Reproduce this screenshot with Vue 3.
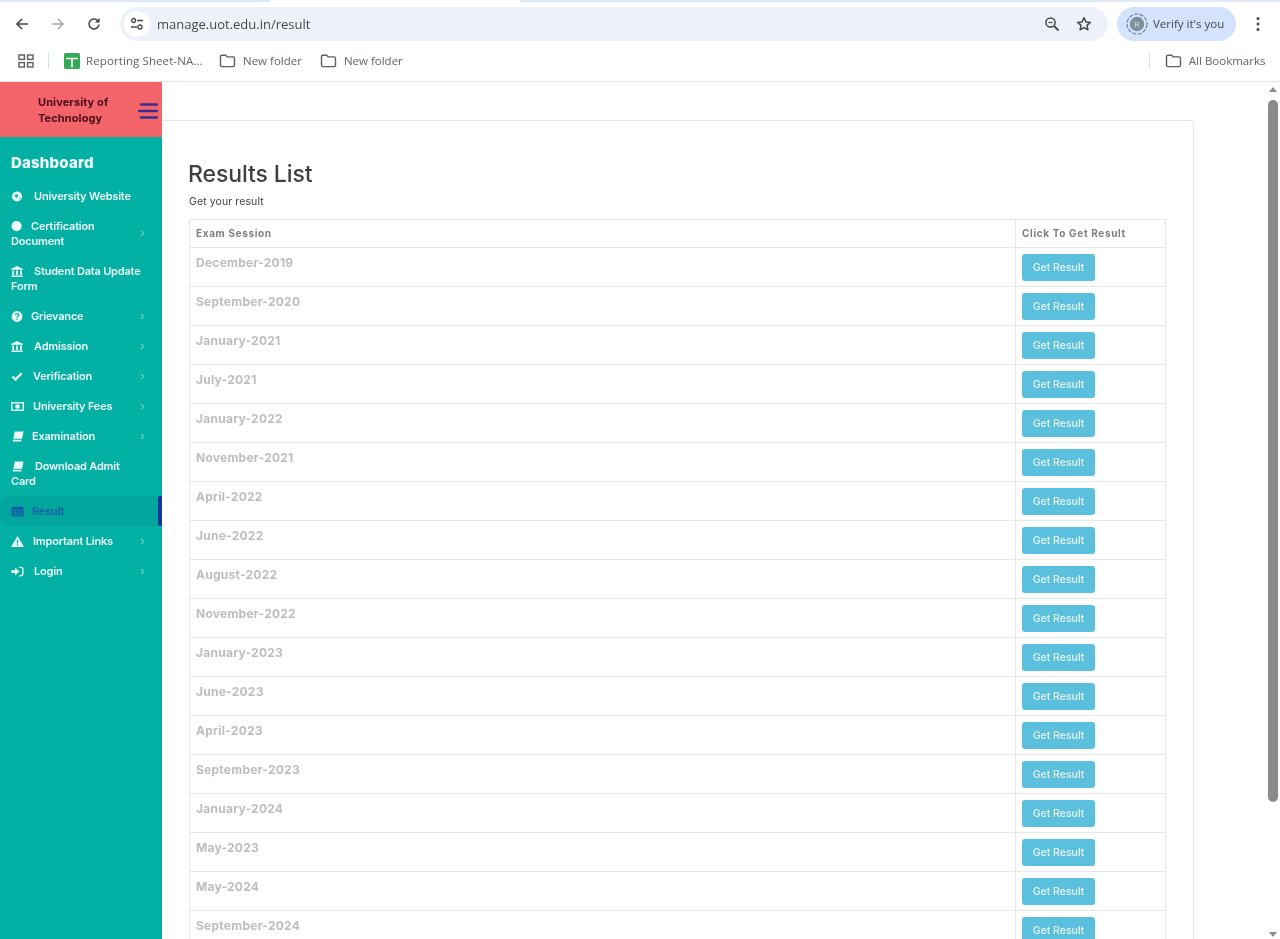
<script setup>
const bookmarks = [
  { label: 'New folder', cls: 'bm-a' },
  { label: 'New folder', cls: 'bm-b' },
]
const menu = [
  { icon: 'globe', first: 'University Website', gap: 10 },
  { icon: 'dot', first: 'Certification', second: 'Document', gap: 7, arrow: true },
  { icon: 'bank', first: 'Student Data Update', second: 'Form', gap: 10 },
  { icon: 'help', first: 'Grievance', gap: 7, arrow: true },
  { icon: 'bank', first: 'Admission', gap: 10, arrow: true },
  { icon: 'check', first: 'Verification', gap: 9, arrow: true },
  { icon: 'money', first: 'University Fees', gap: 9, arrow: true },
  { icon: 'book', first: 'Examination', gap: 8, arrow: true },
  { icon: 'book', first: 'Download Admit', second: 'Card', gap: 11 },
  { icon: 'table', first: 'Result', gap: 8, active: true },
  { icon: 'warn', first: 'Important Links', gap: 9, arrow: true },
  { icon: 'login', first: 'Login', gap: 10, arrow: true },
]
const sessions = [
  'December-2019', 'September-2020', 'January-2021', 'July-2021', 'January-2022',
  'November-2021', 'April-2022', 'June-2022', 'August-2022', 'November-2022',
  'January-2023', 'June-2023', 'April-2023', 'September-2023', 'January-2024',
  'May-2023', 'May-2024', 'September-2024',
]
</script>

<template>
  <div class="page">
    <header class="chrome">
      <div class="tabstrip"><span class="tabstrip-white"></span></div>
      <div class="toolbar">
        <svg class="nav" viewBox="0 0 16 16"><path d="M14 8H3M8 3 3 8l5 5" fill="none" stroke="#474747" stroke-width="1.6"/></svg>
        <svg class="nav nav-fwd" viewBox="0 0 16 16"><path d="M2 8h11M8 3l5 5-5 5" fill="none" stroke="#a4a6a8" stroke-width="1.4"/></svg>
        <svg class="nav nav-reload" viewBox="0 0 16 16"><path d="M13 8.5A5 5 0 1 1 11.4 4.3L13 5.8" fill="none" stroke="#474747" stroke-width="1.6"/><path d="M13.6 2v4.6H9z" fill="#474747"/></svg>
        <div class="omnibox">
          <span class="tune">
            <svg viewBox="0 0 16 16" width="16" height="16"><circle cx="4.5" cy="4.5" r="2" fill="none" stroke="#474747" stroke-width="1.3"/><path d="M8 4.5h6M2 11h6" stroke="#474747" stroke-width="1.5"/><circle cx="11" cy="11" r="2" fill="none" stroke="#474747" stroke-width="1.3"/></svg>
          </span>
          <span class="url">manage.uot.edu.in/result</span>
          <svg class="omni-zoom" viewBox="0 0 16 16"><circle cx="6.5" cy="6.5" r="4.6" fill="none" stroke="#474747" stroke-width="1.5"/><path d="m10 10 4.5 4.5" stroke="#474747" stroke-width="1.8"/><path d="M4.4 6.5h4.2" stroke="#474747" stroke-width="1.2"/></svg>
          <svg class="omni-star" viewBox="0 0 16 16"><path d="m8 1.8 1.9 4.1 4.4.5-3.3 3 .9 4.4L8 11.6l-3.9 2.2.9-4.4-3.3-3 4.4-.5z" fill="none" stroke="#474747" stroke-width="1.5" stroke-linejoin="round"/></svg>
        </div>
        <div class="verify">
          <svg class="avatar" viewBox="0 0 22 22"><circle cx="11" cy="11" r="10" fill="none" stroke="#6d7f94" stroke-width="1.2" stroke-dasharray="4 1.5"/><circle cx="11" cy="11" r="7.2" fill="#7d8f97"/><text x="11" y="14" text-anchor="middle" font-size="8" fill="#dfe7ea" font-family="Open Sans, sans-serif">R</text></svg>
          <span class="verify-text">Verify it's you</span>
        </div>
        <svg class="dots" viewBox="0 0 4 16"><circle cx="2" cy="2.5" r="1.5" fill="#474747"/><circle cx="2" cy="8" r="1.5" fill="#474747"/><circle cx="2" cy="13.5" r="1.5" fill="#474747"/></svg>
      </div>
      <div class="bookmarks">
        <svg class="apps" viewBox="0 0 16 16"><g fill="none" stroke="#5b5e62" stroke-width="1.4"><rect x="1" y="2" width="5.4" height="4.4"/><rect x="9.6" y="2" width="5.4" height="4.4"/><rect x="1" y="9.6" width="5.4" height="4.4"/><rect x="9.6" y="9.6" width="5.4" height="4.4"/></g></svg>
        <span class="sep"></span>
        <svg class="sheet" viewBox="0 0 16 16"><rect width="16" height="16" rx="1.5" fill="#34a853"/><path d="M2 5.500h12M8 5.500v9" stroke="#fff" stroke-width="1.6"/></svg>
        <span class="bm-label bm-sheet">Reporting Sheet-NA...</span>
        <template v-for="b in bookmarks" :key="b.cls">
          <svg class="folder" :class="b.cls" viewBox="0 0 16 14"><path d="M1 2.6C1 1.7 1.6 1.2 2.4 1.2h3.7l1.6 1.7h5.9c.8 0 1.4.6 1.4 1.4v6.9c0 .8-.6 1.4-1.4 1.4H2.4c-.8 0-1.4-.6-1.4-1.4z" fill="none" stroke="#5b5e62" stroke-width="1.4"/></svg>
          <span class="bm-label">{{ b.label }}</span>
        </template>
        <span class="sep sep-right"></span>
        <svg class="folder folder-all" viewBox="0 0 16 14"><path d="M1 2.6C1 1.7 1.6 1.2 2.4 1.2h3.7l1.6 1.7h5.9c.8 0 1.4.6 1.4 1.4v6.9c0 .8-.6 1.4-1.4 1.4H2.4c-.8 0-1.4-.6-1.4-1.4z" fill="none" stroke="#5b5e62" stroke-width="1.4"/></svg>
        <span class="bm-label">All Bookmarks</span>
      </div>
    </header>

    <div class="viewport">
      <aside class="sidebar">
        <div class="brand">
          <div class="brand-name">University of<br />Technology</div>
          <svg class="burger" viewBox="0 0 20 18"><path d="M3 2.5h16" stroke="#3b2c8f" stroke-width="2.4" stroke-linecap="round"/><path d="M1 9h18" stroke="#3b2c8f" stroke-width="2.4" stroke-linecap="round"/><path d="M3 15.5h16" stroke="#3b2c8f" stroke-width="2.4" stroke-linecap="round"/></svg>
        </div>
        <div class="dash">Dashboard</div>
        <nav class="menu">
          <div v-for="item in menu" :key="item.first" class="item" :class="{ active: item.active }">
            <div class="item-text">
              <div class="line">
                <svg class="ico" viewBox="0 0 14 14">
                  <template v-if="item.icon === 'globe'"><circle cx="6.5" cy="7" r="5.500" fill="currentColor"/><path d="M3.500 5.500 7 4.500l1 2-2.300 2zM8.500 9l2-.8-.8 2.300z" fill="#03b0a4"/></template>
                  <circle v-else-if="item.icon === 'dot'" cx="6" cy="6.500" r="5.500" fill="currentColor"/>
                  <path v-else-if="item.icon === 'bank'" d="M6.500 1 13 4.200v1H0v-1zM1.300 6h2v4.800h-2zM5.500 6h2v4.800h-2zM9.700 6h2v4.800h-2zM.5 11.400h12V13H.5z" fill="currentColor"/>
                  <template v-else-if="item.icon === 'help'"><circle cx="6.500" cy="7" r="5.800" fill="currentColor"/><path d="M4.800 5.600c0-2.200 3.600-2.200 3.600-.1 0 1.400-1.900 1.300-1.900 2.800" fill="none" stroke="#03b0a4" stroke-width="1.300"/><circle cx="6.500" cy="10" r=".8" fill="#03b0a4"/></template>
                  <path v-else-if="item.icon === 'check'" d="m1.500 7 3.300 3.300L11.500 3.500" fill="none" stroke="currentColor" stroke-width="2.500"/>
                  <template v-else-if="item.icon === 'money'"><rect x=".8" y="3" width="12.400" height="8" fill="none" stroke="currentColor" stroke-width="1.500"/><circle cx="7" cy="7" r="2.500" fill="currentColor"/></template>
                  <path v-else-if="item.icon === 'book'" d="M4 1.500h9.500l-1.600 8H2.500zM2 10.500h9.300l-.3 2H3c-1.200 0-1.400-1.300-1-2z" fill="currentColor"/>
                  <template v-else-if="item.icon === 'table'"><rect x=".5" y="2" width="13" height="10.500" rx="1" fill="currentColor"/><path d="M1.500 5.800h11M1.500 8.300h11M1.500 10.500h11M5 5.800v6M9 5.800v6" stroke="#03a69c" stroke-width=".6"/></template>
                  <path v-else-if="item.icon === 'warn'" d="M7 1 14 13H0zM6.300 5v4.200h1.400V5zM6.300 10v1.400h1.400V10z" fill="currentColor" fill-rule="evenodd"/>
                  <template v-else-if="item.icon === 'login'"><path d="M.5 5.500h4V2.800L9 7l-4.500 4.200V8.500h-4z" fill="currentColor"/><path d="M9 2.500h1.500c1.300 0 2.300 1 2.300 2.300v4.400c0 1.300-1 2.300-2.300 2.300H9" fill="none" stroke="currentColor" stroke-width="1.500"/></template>
                </svg>
                <span :style="{ marginLeft: item.gap + 'px' }">{{ item.first }}</span>
              </div>
              <div v-if="item.second" class="line">{{ item.second }}</div>
            </div>
            <svg v-if="item.arrow" class="chev" viewBox="0 0 6 8"><path d="m1.500 1 3 3-3 3" fill="none" stroke="currentColor" stroke-width="1.100"/></svg>
          </div>
        </nav>
      </aside>

      <main class="content">
        <section class="card">
          <h1 class="title">Results List</h1>
          <p class="sub">Get your result</p>
          <table class="results">
            <thead>
              <tr>
                <th>Exam Session</th>
                <th class="col-action">Click To Get Result</th>
              </tr>
            </thead>
            <tbody>
              <tr v-for="s in sessions" :key="s">
                <td class="session">{{ s }}</td>
                <td class="col-action action"><span class="btn">Get Result</span></td>
              </tr>
            </tbody>
          </table>
        </section>
      </main>

      <div class="scrollbar">
        <span class="arrow-up"></span>
        <span class="thumb"></span>
        <span class="arrow-down"></span>
      </div>
    </div>
  </div>
</template>

<style>
html, body { margin: 0; background: #fff; overflow: hidden; }
</style>

<style scoped>
.page { width: 1280px; height: 939px; overflow: hidden; display: flex; flex-direction: column; font-family: Inter, "Liberation Sans", sans-serif; background: #fff; filter: blur(.35px); }

.chrome { flex: 0 0 82px; box-sizing: border-box; border-bottom: 1px solid #e3e3e3; background: #fff; display: flex; flex-direction: column; }
.tabstrip { height: 2px; background: #dfe9f8; display: flex; }
.tabstrip-white { width: 250px; margin-left: 270px; background: #fff; }
.toolbar { padding-top: 5px; height: 34px; display: flex; align-items: center; }
.nav { width: 16px; height: 16px; margin-left: 14px; flex: none; }
.nav-fwd { margin-left: 20px; }
.nav-reload { margin-left: 20px; }
.omnibox { margin-left: 18px; width: 988px; height: 34px; border-radius: 17px; background: #edf2fa; display: flex; align-items: center; flex: none; }
.tune { width: 26px; height: 26px; margin-left: 4px; border-radius: 50%; background: #fff; display: flex; align-items: center; justify-content: center; }
.url { margin-left: 7px; font: 13px "Open Sans", sans-serif; color: #474747; flex: 1; }
.omni-zoom { width: 16px; height: 16px; }
.omni-star { width: 16px; height: 16px; margin-left: 16px; margin-right: 16px; }
.verify { margin-left: 9px; width: 119px; height: 34px; border-radius: 17px; background: #d3e3fd; display: flex; align-items: center; font: 11.5px "Open Sans", sans-serif; color: #43474e; flex: none; }
.verify-text { margin-top: -2px; }
.avatar { width: 22px; height: 22px; margin: 0 5px 0 9px; }
.dots { width: 4px; height: 16px; margin-left: 20px; }

.bookmarks { height: 38px; display: flex; align-items: center; font: 11.5px "Open Sans", sans-serif; color: #5f6368; padding-top: 1px; box-sizing: border-box; }
.apps { width: 16px; height: 16px; margin-left: 18px; flex: none; }
.sep { width: 1px; height: 16px; background: #d5e2f4; margin-left: 14px; flex: none; }
.sheet { width: 16px; height: 16px; margin-left: 15px; flex: none; }
.bm-label { white-space: nowrap; }
.bm-sheet { margin-left: 6px; width: 117px; letter-spacing: .1px; }
.folder { width: 17px; height: 14px; margin-right: 7px; flex: none; margin-left: 17px; }
.bm-a { margin-left: 16px; }
.bm-b { margin-left: 18px; }
.folder-all { margin-left: 15px; }
.sep-right { margin-left: 746px; }

.viewport { flex: 1; min-height: 0; display: flex; }

.sidebar { flex: 0 0 162px; background: #03b0a4; color: #fff; }
.brand { height: 55px; background: #f4646b; position: relative; }
.brand-name { position: absolute; left: 38px; top: 12px; font-size: 11px; line-height: 16px; font-weight: 700; color: #4a0b18; letter-spacing: .1px; }
.burger { position: absolute; left: 138px; top: 20px; width: 20px; height: 18px; }
.dash { padding: 17px 0 0 11px; height: 44px; box-sizing: border-box; font-size: 15px; line-height: 18px; font-weight: 800; letter-spacing: .2px; color: #f2fffd; }
.menu { display: flex; flex-direction: column; }
.item { position: relative; display: flex; align-items: center; padding: 7.5px 17px 7.5px 11px; font-size: 11px; line-height: 15px; font-weight: 600; letter-spacing: -.2px; color: #eafbf9; }
.item-text { flex: 1; min-width: 0; }
.line { display: flex; align-items: center; white-space: nowrap; }
.ico { width: 13px; height: 13px; flex: none; }
.chev { width: 5px; height: 7px; flex: none; opacity: .8; }
.item.active { background: #03a69c; border-radius: 8px 0 0 8px; color: #0f5ea8; }
.item.active::after { content: ""; position: absolute; right: 0; top: 0; bottom: 0; width: 4px; background: #17349f; border-radius: 2px 0 0 2px; }

.content { flex: 1; min-width: 0; padding: 38px 73px 0 0; overflow: hidden; }
.card { border: 1px solid #e7e7e7; border-left: 0; border-radius: 0 4px 0 0; padding: 40px 26px 0 27px; height: 900px; box-sizing: border-box; }
.title { margin: 0 0 0 -1px; font-size: 23px; line-height: 26px; font-weight: 500; color: #3f3f3f; letter-spacing: -.1px; }
.sub { margin: 8px 0 0; font-size: 10.5px; line-height: 14px; letter-spacing: .1px; color: #444; }
.results { margin-top: 10px; width: 977px; border-collapse: collapse; table-layout: fixed; }
.results th, .results td { border: 1px solid #e8e8e8; padding: 0 6px; box-sizing: border-box; text-align: left; vertical-align: top; }
.results th { height: 28px; font-size: 10px; line-height: 27px; font-weight: 700; color: #7d7d7d; letter-spacing: .65px; }
.results td { height: 39px; }
.session { padding-top: 7px !important; font-size: 12px; line-height: 16px; font-weight: 700; color: #bdbdbd; letter-spacing: .25px; }
.col-action { width: 150px; }
.action { padding-top: 6px !important; }
.btn { display: block; width: 73px; height: 27px; border-radius: 3px; background: #5bc0de; color: #e6f6fb; font-size: 10.5px; line-height: 27px; font-weight: 500; text-align: center; }

.scrollbar { position: relative; flex: 0 0 12px; width: 12px; margin-right: 1px; display: flex; flex-direction: column; align-items: center; }
.thumb { width: 10px; height: 702px; margin-top: 8px; background: #8b8b8b; border-radius: 5px; }
.arrow-up { margin-top: 5px; width: 0; height: 0; border: 4px solid transparent; border-top: 0; border-bottom: 5px solid #8b8b8b; }
.arrow-down { position: absolute; bottom: 2px; width: 0; height: 0; border: 4px solid transparent; border-bottom: 0; border-top: 5px solid #8b8b8b; }
</style>
